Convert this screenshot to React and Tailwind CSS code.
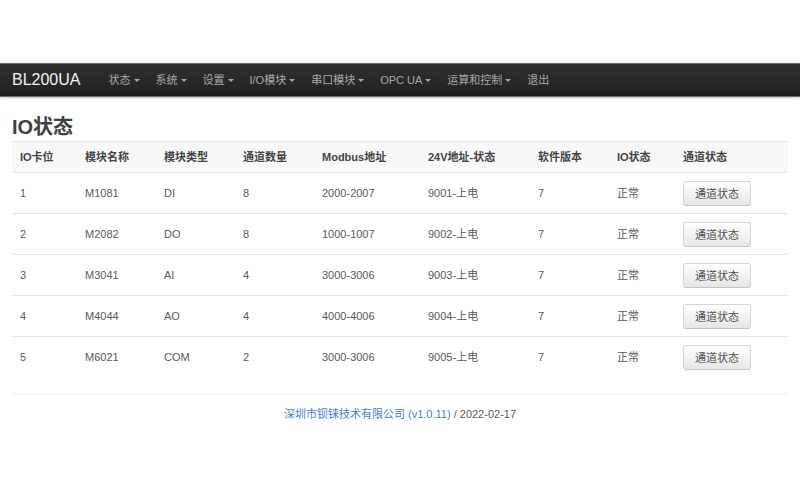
const menus = [
  { label: '状态', dropdown: true },
  { label: '系统', dropdown: true },
  { label: '设置', dropdown: true },
  { label: 'I/O模块', dropdown: true },
  { label: '串口模块', dropdown: true },
  { label: 'OPC UA', dropdown: true },
  { label: '运算和控制', dropdown: true },
  { label: '退出', dropdown: false },
]

const columns = [
  { label: 'IO卡位', width: 'w-[65px]' },
  { label: '模块名称', width: 'w-[79px]' },
  { label: '模块类型', width: 'w-[79px]' },
  { label: '通道数量', width: 'w-[79px]' },
  { label: 'Modbus地址', width: 'w-[106px]' },
  { label: '24V地址-状态', width: 'w-[110px]' },
  { label: '软件版本', width: 'w-[79px]' },
  { label: 'IO状态', width: 'w-[66px]' },
  { label: '通道状态', width: 'w-[113px]' },
]

const rows = [
  ['1', 'M1081', 'DI', '8', '2000-2007', '9001-上电', '7', '正常'],
  ['2', 'M2082', 'DO', '8', '1000-1007', '9002-上电', '7', '正常'],
  ['3', 'M3041', 'AI', '4', '3000-3006', '9003-上电', '7', '正常'],
  ['4', 'M4044', 'AO', '4', '4000-4006', '9004-上电', '7', '正常'],
  ['5', 'M6021', 'COM', '2', '3000-3006', '9005-上电', '7', '正常'],
]

function Caret() {
  return (
    <svg className="h-[3px] w-[6px]" viewBox="0 0 6 3" aria-hidden="true">
      <path d="M0 0h6L3 3z" fill="currentColor" />
    </svg>
  )
}

function Navbar() {
  return (
    <header className="flex h-[34px] items-center border-y border-[#6b6b6b] bg-linear-to-b from-[#303030] to-[#212121] px-3 shadow-[0_1px_2px_rgba(0,0,0,0.25)]">
      <a href="#" className="mr-5 text-[16px] leading-5 text-[#f2f2f2]">
        BL200UA
      </a>
      <nav className="flex items-center">
        {menus.map((menu) => (
          <a key={menu.label} href="#" className="flex items-center gap-[3px] px-2 whitespace-nowrap text-[#a8a8a8]">
            {menu.label}
            {menu.dropdown ? <Caret /> : null}
          </a>
        ))}
      </nav>
    </header>
  )
}

function ModuleTable() {
  return (
    <table className="w-full table-fixed border-collapse text-left">
      <thead className="bg-[#f8f8f8]">
        <tr className="h-[31px] border-y border-[#e6e6e6]">
          {columns.map((col) => (
            <th key={col.label} scope="col" className={`${col.width} px-2 pb-px font-bold whitespace-nowrap text-[#444]`}>
              {col.label}
            </th>
          ))}
        </tr>
      </thead>
      <tbody>
        {rows.map((row) => (
          <tr key={row[0]} className="border-t border-[#e2e2e2]">
            {row.map((cell, i) => (
              <td key={i} className="px-2 pb-px">
                {cell}
              </td>
            ))}
            <td className="px-2 pt-2 pb-[7px]">
              <button
                type="button"
                className="block h-[25px] rounded-[3px] border border-[#d6d6d6] border-b-[#c4c4c4] bg-linear-to-b from-white to-[#e6e6e6] px-[11px] whitespace-nowrap text-[#505050]"
              >
                通道状态
              </button>
            </td>
          </tr>
        ))}
      </tbody>
    </table>
  )
}

export default function App() {
  return (
    <div className="min-h-screen bg-white pt-[63px] font-['Liberation_Sans','Noto_Sans_CJK_SC',sans-serif] text-[11px] leading-4 text-[#5a5a5a]">
      <Navbar />
      <main className="px-3 pt-4">
        <h1 className="text-[20px] leading-7 font-bold text-[#404040]">IO状态</h1>
        <ModuleTable />
      </main>
      <footer className="mx-3 mt-4 border-t border-[#f0f0f0] pt-3 text-center">
        <a href="#" className="text-[#3b82dc]">
          深圳市钡铼技术有限公司 (v1.0.11)
        </a>{' '}
        / 2022-02-17
      </footer>
    </div>
  )
}
